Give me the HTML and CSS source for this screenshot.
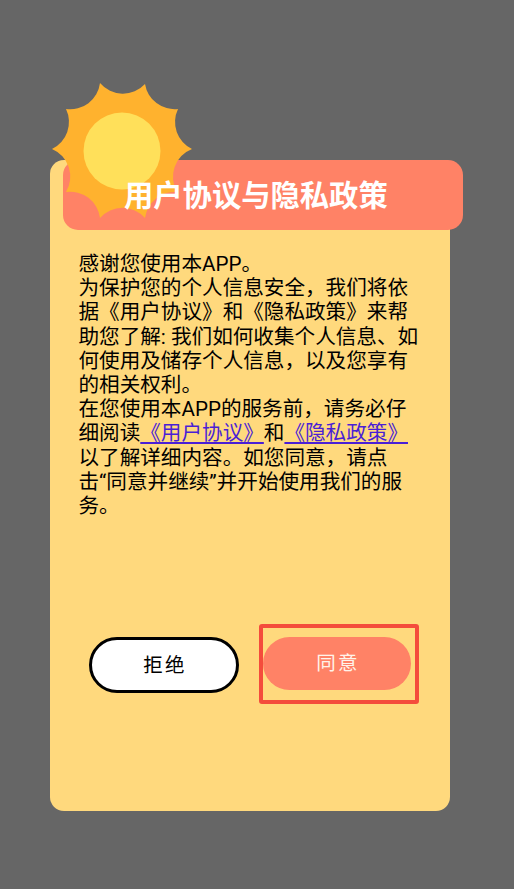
FILE: index.html
```html
<!DOCTYPE html>
<html lang="zh-CN">
<head>
<meta charset="utf-8">
<title>用户协议与隐私政策</title>
<link rel="stylesheet" href="styles.css">
</head>
<body>
<main class="card">
  <svg class="sun" viewBox="0 0 150 146" width="150" height="146" aria-hidden="true">
    <path class="rays" d="M48 3A30 30 0 0 0 93 4A30 30 0 0 0 126 29A30 30 0 0 0 140 69A30 30 0 0 0 125 112A30 30 0 0 0 93 138A30 30 0 0 0 48 138A30 30 0 0 0 14 112A30 30 0 0 0 0 69A30 30 0 0 0 14 29A30 30 0 0 0 48 3Z"/>
    <circle class="core" cx="70" cy="71" r="38.5"/>
  </svg>
  <header class="banner"><h1 class="title">用户协议与隐私政策</h1></header>
  <div class="body">
    <p class="copy">感谢您使用本APP。<br>为保护您的个人信息安全，我们将依据《用户协议》和《隐私政策》来帮助您了解: 我们如何收集个人信息、如何使用及储存个人信息，以及您享有的相关权利。<br>在您使用本APP的服务前，请务必仔细阅读<a class="link" href="#">《用户协议》</a>和<a class="link" href="#">《隐私政策》</a>以了解详细内容。如您同意，请点<span class="nobr">击“同意</span>并继续”并开始使用我们的服务。</p>
  </div>
  <div class="actions">
    <button class="btn btn-reject" type="button">拒绝</button>
    <div class="highlight"><button class="btn btn-agree" type="button">同意</button></div>
  </div>
</main>
</body>
</html>
```
FILE: styles.css
```css
* { box-sizing: border-box; }
html, body { margin: 0; height: 100%; }
body {
  background: #666666;
  padding: 160px 64px 78px 50px;
  font-family: Roboto, "Noto Sans CJK SC", sans-serif;
  overflow: hidden;
}
.card {
  position: relative;
  width: 400px;
  height: 651px;
  background: #ffd97d;
  border-radius: 14px;
  display: flex;
  flex-direction: column;
}
.sun {
  position: absolute;
  left: 2px;
  top: -80px;
  z-index: 1;
  overflow: visible;
}
.rays { fill: #ffb22e; }
.core { fill: #ffe05a; }
.banner {
  margin-left: 13px;
  width: 400px;
  height: 70px;
  flex: none;
  background: #ff8266;
  border-radius: 15px;
  display: flex;
  align-items: center;
}
.title {
  position: relative;
  z-index: 2;
  margin: 4px 0 0 61px;
  color: #ffffff;
  font-size: 29.3px;
  line-height: 1.2;
  font-weight: 700;
  white-space: nowrap;
}
.body { padding: 22px 29px 0 28.5px; flex: 1; }
.copy {
  margin: 0;
  color: #000000;
  font-size: 20.6px;
  line-height: 24.2px;
}
.nobr { white-space: nowrap; }
.link { color: #4a1fd6; text-decoration: underline; }
.actions {
  display: flex;
  align-items: flex-start;
  gap: 20px;
  padding: 0 31px 107px 39px;
}
.btn {
  font-family: "Noto Sans CJK SC", sans-serif;
  font-size: 19.5px;
  line-height: 1;
  letter-spacing: 2.2px;
  border-radius: 28px;
  display: block;
  padding: 0 0 3px 2px;
}
.btn-reject {
  width: 150px;
  height: 56px;
  margin-top: 13px;
  background: #ffffff;
  color: #000000;
  border: 3px solid #000000;
}
.highlight {
  width: 160px;
  height: 80px;
  border: 4px solid #f44c3c;
  border-radius: 3px;
  padding: 9px 0 0;
}
.btn-agree {
  width: 148px;
  height: 53px;
  background: #ff8266;
  color: #fff3ea;
  border: 0;
}
```
